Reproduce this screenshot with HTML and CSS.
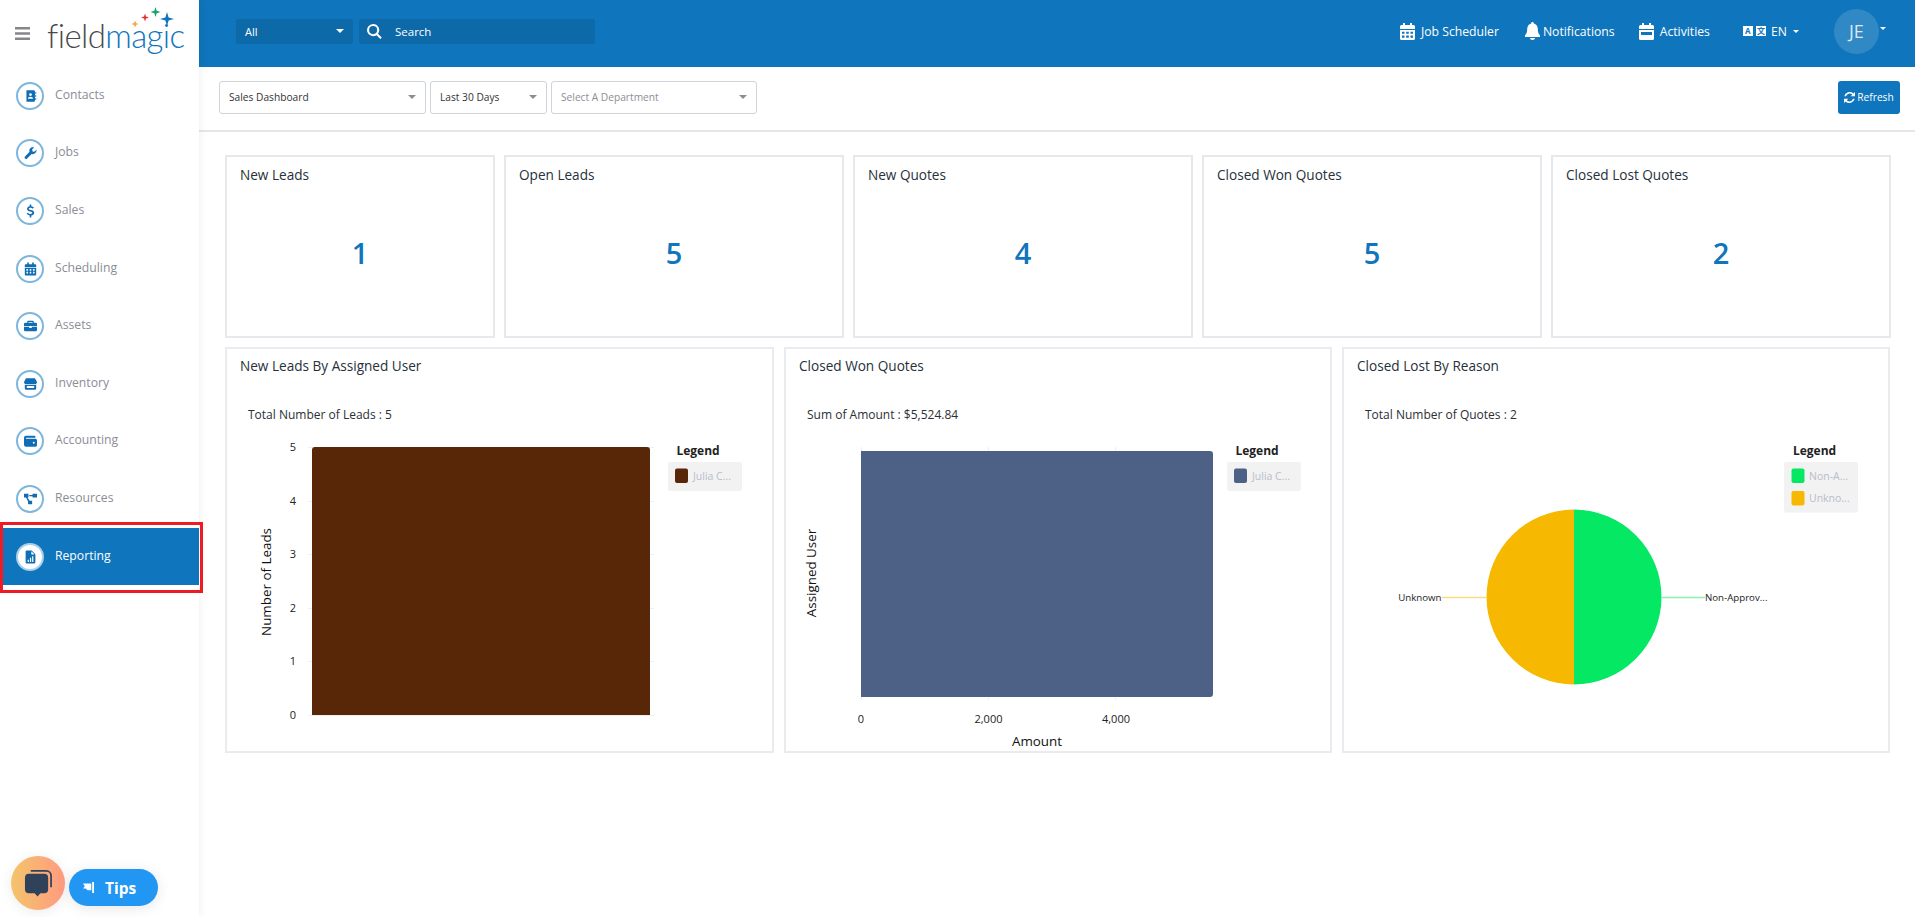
FILE: index.html
```html
<!DOCTYPE html>
<html lang="en">
<head>
<meta charset="utf-8">
<title>Sales Dashboard</title>
<link rel="stylesheet" href="styles.css">
</head>
<body>
<div class="app">
  <aside class="sidebar">
    <div class="brand">
      <svg class="burger" viewBox="0 0 15 13"><path d="M0 0h15v2.400H0zM0 5.300h15v2.400H0zM0 10.600h15V13H0z"/></svg>
      <div class="logo">
        <span class="logo-field">field</span><span class="logo-magic">magic</span>
        <svg class="logo-stars" viewBox="0 0 50 24">
          <path fill="#f4a63a" d="M4 13.500l1 2.500 2.500 1-2.500 1-1 2.500-1-2.500-2.500-1 2.500-1z"/>
          <path fill="#e8303c" d="M14 6.500l1 3 3 1-3 1-1 3-1-3-3-1 3-1z"/>
          <path fill="#16a765" d="M24.500 0l1.200 3.800 3.800 1.200-3.800 1.200-1.200 3.800-1.200-3.800-3.800-1.200 3.800-1.200z"/>
          <path fill="#0f75bc" d="M36 5l1.600 5.400 5.400 1.600-5.400 1.600-1.600 5.400-1.600-5.400-5.400-1.600 5.400-1.600z"/>
        </svg>
      </div>
    </div>
    <nav class="nav">
      <a class="nav-item"><span class="nav-icon"><svg viewBox="0 0 16 16"><path d="M3 1h9a1.500 1.500 0 0 1 1.500 1.500v11A1.500 1.500 0 0 1 12 15H3zM8 4.500a1.800 1.800 0 1 0 0 3.600 1.800 1.800 0 0 0 0-3.600zM4.800 11.500h6.400c0-1.800-1.400-2.700-3.200-2.700s-3.200.9-3.200 2.700zM14 3h1v2.500h-1zM14 6.700h1v2.500h-1zM14 10.400h1v2.500h-1z"/></svg></span><span class="nav-label">Contacts</span></a>
      <a class="nav-item"><span class="nav-icon"><svg viewBox="0 0 16 16"><path d="M15.300 4.100l-2.500 2.500-2.300-.5-.5-2.300L12.500 1.300C10.700.5 8.600 1 7.500 2.400c-1 1.200-1.200 2.800-.6 4.200L1 12.500a1.800 1.800 0 0 0 2.500 2.500l5.900-5.900c1.400.6 3 .3 4.200-.7 1.400-1.100 2.100-3 1.700-4.300z"/></svg></span><span class="nav-label">Jobs</span></a>
      <a class="nav-item"><span class="nav-icon"><svg viewBox="0 0 16 16"><path d="M7 0h2v2c1.400.2 2.500.8 3.300 1.700l-1.400 1.400c-.8-.8-1.700-1.200-2.800-1.200-1.300 0-2.100.5-2.100 1.300 0 .9.900 1.200 2.400 1.500 2.200.5 4.200 1.200 4.200 3.500 0 1.900-1.500 3.100-3.600 3.300v2.500H7v-2.500c-1.600-.2-2.900-.9-3.800-2l1.500-1.400c.8.900 1.900 1.500 3.200 1.500 1.400 0 2.300-.5 2.300-1.400 0-.9-.9-1.200-2.500-1.600C5.600 8.100 3.800 7.400 3.800 5.200 3.800 3.500 5.100 2.300 7 2z"/></svg></span><span class="nav-label">Sales</span></a>
      <a class="nav-item"><span class="nav-icon"><svg viewBox="0 0 16 16"><path fill-rule="evenodd" d="M4 0h2v2h4V0h2v2h2a1 1 0 0 1 1 1v2.500H1V3a1 1 0 0 1 1-1h2zM1 6.500h14V15a1 1 0 0 1-1 1H2a1 1 0 0 1-1-1zM3 8v2h2V8zm4 0v2h2V8zm4 0v2h2V8zM3 11.500v2h2v-2zm4 0v2h2v-2zm4 0v2h2v-2z"/></svg></span><span class="nav-label">Scheduling</span></a>
      <a class="nav-item"><span class="nav-icon"><svg viewBox="0 0 16 16"><path fill-rule="evenodd" d="M5 1.500h6a1 1 0 0 1 1 1V4h2.500A1.500 1.500 0 0 1 16 5.500V8H0V5.500A1.500 1.500 0 0 1 1.500 4H4V2.500a1 1 0 0 1 1-1zM5.500 3v1h5V3zM0 9h6.500v1.500h3V9H16v4a1.500 1.500 0 0 1-1.500 1.500h-13A1.500 1.500 0 0 1 0 13z"/></svg></span><span class="nav-label">Assets</span></a>
      <a class="nav-item"><span class="nav-icon"><svg viewBox="0 0 16 16"><path fill-rule="evenodd" d="M2.500 1h11l2.500 4.500C16 7 15 8 13.800 8H2.200C1 8 0 7 0 5.500zM1 9h14v4.500a1.500 1.500 0 0 1-1.500 1.500h-11A1.500 1.500 0 0 1 1 13.500zm2.500 1.500V13h9v-2.500z"/></svg></span><span class="nav-label">Inventory</span></a>
      <a class="nav-item"><span class="nav-icon"><svg viewBox="0 0 16 16"><path fill-rule="evenodd" d="M2.500 1.500h10.500a1 1 0 0 1 1 1V4H2.800a.6.600 0 0 0 0 1.200H14a2 2 0 0 1 2 2v6A1.800 1.800 0 0 1 14.200 15H2.500A2.500 2.500 0 0 1 0 12.500v-8.500a2.500 2.500 0 0 1 2.500-2.500zM12 9a1.200 1.200 0 1 0 0 2.400A1.200 1.200 0 0 0 12 9z"/></svg></span><span class="nav-label">Accounting</span></a>
      <a class="nav-item"><span class="nav-icon"><svg viewBox="0 0 16 16"><path d="M0 1.500h5.500v4.500H4.300l2.700 4h3v4.500H5V11L2.500 6H0zM10.500 1.500H16V6h-5.500V4.600H6.500V3h4z"/></svg></span><span class="nav-label">Resources</span></a>
      <a class="nav-item is-active"><span class="nav-icon"><svg viewBox="0 0 16 16"><path fill-rule="evenodd" d="M3 0h6.500L14 4.500V14.500a1.500 1.500 0 0 1-1.500 1.500h-9A1.500 1.500 0 0 1 2 14.500V1a1 1 0 0 1 1-1zM9 1v4h4zM4.500 11.500V14H6v-2.500zM7.300 9v5h1.500V9zM10 7v7h1.500V7z"/></svg></span><span class="nav-label">Reporting</span></a>
    </nav>
  </aside>

  <div class="main">
    <header class="topbar">
      <div class="search-group">
        <div class="search-scope"><span>All</span><i class="caret caret-white"></i></div>
        <div class="search-box">
          <svg class="search-icon" viewBox="0 0 16 16"><path d="M6.500 0a6.500 6.500 0 0 1 5.200 10.400l4 4-1.500 1.500-4-4A6.500 6.500 0 1 1 6.500 0zm0 2.200a4.300 4.300 0 1 0 0 8.600 4.300 4.300 0 0 0 0-8.600z"/></svg>
          <span>Search</span>
        </div>
      </div>
      <div class="top-actions">
        <a class="top-link link-job"><svg class="top-icon" viewBox="0 0 15 17"><path fill-rule="evenodd" d="M3 0h2v2h5V0h2v2h1.500A1.500 1.500 0 0 1 15 3.500V6H0V3.500A1.500 1.500 0 0 1 1.500 2H3zM0 7h15v8.500a1.500 1.500 0 0 1-1.500 1.500h-12A1.500 1.500 0 0 1 0 15.500zm2 1.800v2h2.500v-2zm4.200 0v2h2.600v-2zm4.300 0v2H13v-2zM2 12.500v2.300h2.500v-2.300zm4.200 0v2.300h2.600v-2.300zm4.300 0v2.300H13v-2.300z"/></svg>Job Scheduler</a>
        <a class="top-link link-note"><svg class="bell-icon" viewBox="0 0 15 18"><path d="M7.500 0c.8 0 1.300.6 1.300 1.400 2.700.6 4 2.800 4 5.600 0 3.500.9 4.800 2.200 6.200V15H0v-1.800C1.300 11.800 2.200 10.500 2.200 7c0-2.800 1.300-5 4-5.600C6.200.6 6.700 0 7.500 0zM5 16h5c0 1.100-1.100 2-2.500 2S5 17.100 5 16z"/></svg>Notifications</a>
        <a class="top-link link-act"><svg class="top-icon" viewBox="0 0 15 17"><path fill-rule="evenodd" d="M3 0h2v2h5V0h2v2h1.500A1.500 1.500 0 0 1 15 3.500V6H0V3.500A1.500 1.500 0 0 1 1.500 2H3zM0 7h15v8.500a1.500 1.500 0 0 1-1.500 1.500h-12A1.500 1.500 0 0 1 0 15.500zm2 2v3h11V9z"/></svg>Activities</a>
        <a class="top-link link-lang"><span class="lang-icon"><b class="lang-a">A</b><b class="lang-b">文</b></span>EN<i class="caret caret-white caret-small"></i></a>
        <div class="avatar">JE</div>
        <i class="caret caret-white caret-small caret-avatar"></i>
      </div>
    </header>

    <section class="toolbar">
      <div class="select select-a"><span>Sales Dashboard</span><i class="caret"></i></div>
      <div class="select select-b"><span>Last 30 Days</span><i class="caret"></i></div>
      <div class="select select-c"><span class="placeholder">Select A Department</span><i class="caret"></i></div>
      <button class="refresh"><svg viewBox="0 0 12 12"><path d="M10.300 1.700L12 0v4.700H7.300l1.700-1.700A4 4 0 0 0 2.200 4.700H.3a5.900 5.900 0 0 1 10-3zM0 7.300h4.700L3 9a4 4 0 0 0 6.800-1.700h1.900a5.900 5.900 0 0 1-10 3L0 12z"/></svg>Refresh</button>
    </section>

    <section class="content">
      <div class="kpi-row">
        <article class="kpi kpi-first"><h3>New Leads</h3><p>1</p></article>
        <article class="kpi"><h3>Open Leads</h3><p>5</p></article>
        <article class="kpi"><h3>New Quotes</h3><p>4</p></article>
        <article class="kpi"><h3>Closed Won Quotes</h3><p>5</p></article>
        <article class="kpi"><h3>Closed Lost Quotes</h3><p>2</p></article>
      </div>
      <div class="chart-row">
        <article class="chart-card">
          <h3>New Leads By Assigned User</h3>
          <p class="chart-sum">Total Number of Leads : 5</p>
          <svg class="chart" viewBox="0 0 545 321">
            <g class="grid">
              <path d="M81 17.500H427M81 71.500H427M81 124.500H427M81 178.500H427M81 231.500H427M81 285.500H427"/>
            </g>
            <path fill="#582707" d="M85 285V20a3 3 0 0 1 3-3H420a3 3 0 0 1 3 3V285z"/>
            <g class="tick" text-anchor="middle">
              <text x="66" y="21">5</text><text x="66" y="75">4</text><text x="66" y="128">3</text><text x="66" y="182">2</text><text x="66" y="235">1</text><text x="66" y="289">0</text>
            </g>
            <text class="axis-title" text-anchor="middle" transform="translate(44 152) rotate(-90)">Number of Leads</text>
            <text class="legend-title" x="471" y="24.500" text-anchor="middle">Legend</text>
            <rect class="legend-box" x="441" y="32" width="74" height="29" rx="2"/>
            <rect x="448" y="38.500" width="13" height="14.500" rx="2" fill="#582707"/>
            <text class="legend-text" x="466" y="50">Julia C...</text>
          </svg>
        </article>
        <article class="chart-card">
          <h3>Closed Won Quotes</h3>
          <p class="chart-sum">Sum of Amount : $5,524.84</p>
          <svg class="chart" viewBox="0 0 545 321">
            <g class="grid">
              <path d="M75.500 17V270M202.500 17V270M329.500 17V270"/>
            </g>
            <path fill="#4d6085" d="M75 21H424a3 3 0 0 1 3 3V264a3 3 0 0 1-3 3H75z"/>
            <g class="tick" text-anchor="middle">
              <text x="75" y="293">0</text><text x="202.500" y="293">2,000</text><text x="330" y="293">4,000</text>
            </g>
            <text class="axis-title" x="251" y="316" text-anchor="middle">Amount</text>
            <text class="axis-title" text-anchor="middle" transform="translate(30 143) rotate(-90)">Assigned User</text>
            <text class="legend-title" x="471" y="24.500" text-anchor="middle">Legend</text>
            <rect class="legend-box" x="441" y="32" width="74" height="29" rx="2"/>
            <rect x="448" y="38.500" width="13" height="14.500" rx="2" fill="#4d6085"/>
            <text class="legend-text" x="466" y="50">Julia C...</text>
          </svg>
        </article>
        <article class="chart-card">
          <h3>Closed Lost By Reason</h3>
          <p class="chart-sum">Total Number of Quotes : 2</p>
          <svg class="chart" viewBox="0 0 545 321">
            <path fill="#05e864" d="M230 79.500A87.500 87.500 0 0 1 230 254.500z"/>
            <path fill="#f6b800" d="M230 79.500A87.500 87.500 0 0 0 230 254.500z"/>
            <path class="leader-green" d="M317.500 167.500H361"/>
            <path class="leader-amber" d="M98 167.500H142.500"/>
            <text class="pie-label" x="97.500" y="171" text-anchor="end">Unknown</text>
            <text class="pie-label" x="361" y="171">Non-Approv...</text>
            <text class="legend-title" x="470.500" y="24.500" text-anchor="middle">Legend</text>
            <rect class="legend-box" x="440" y="32" width="74" height="50.500" rx="2"/>
            <rect x="447.500" y="38.500" width="13" height="14.500" rx="2" fill="#05e864"/>
            <text class="legend-text" x="465" y="50">Non-A...</text>
            <rect x="447.500" y="61" width="13" height="14.500" rx="2" fill="#f6b800"/>
            <text class="legend-text" x="465" y="72">Unkno...</text>
          </svg>
        </article>
      </div>
    </section>
  </div>
</div>

<div class="annotation"></div>
<div class="chat-bubble">
  <svg viewBox="0 0 30 30"><path fill="none" stroke="#2f4259" stroke-width="1.800" d="M7 2h16a5 5 0 0 1 5 5v12"/><path fill="#2f4259" d="M5 5h16a4 4 0 0 1 4 4v12a4 4 0 0 1-4 4h-4l-3 3.500-3-3.500H5a4 4 0 0 1-4-4V9a4 4 0 0 1 4-4z"/></svg>
</div>
<button class="tips"><svg viewBox="0 0 12 12"><path d="M10 0h2v12h-2zM0 1.500h9V9H5L3 7H0l2-2.500z"/></svg>Tips</button>
</body>
</html>
```

FILE: styles.css
```css
* { box-sizing: border-box; }
html, body { margin: 0; height: 100%; }
body {
  font-family: "Open Sans", "Noto Sans", sans-serif;
  background: #fff;
  color: #26303a;
  overflow: hidden;
}
.app { display: flex; height: 917px; }

/* Sidebar */
.sidebar {
  flex: 0 0 199px;
  width: 199px;
  min-width: 0;
  background: #fff;
  box-shadow: 2px 0 8px rgba(0, 0, 0, .05);
  position: relative;
  z-index: 2;
}
.brand { display: flex; align-items: center; height: 67px; padding-left: 15px; }
.burger { width: 15px; height: 13px; fill: #84868a; }
.logo { position: relative; margin-left: 17px; font-family: Lato, sans-serif; font-weight: 300; font-size: 33px; line-height: 40px; letter-spacing: -.6px; margin-top: 3px; white-space: nowrap; }
.logo-field { color: #4a4a4c; }
.logo-magic { color: #0f75bc; }
.logo-stars { position: absolute; left: 84px; top: -8px; width: 50px; height: 24px; }
.nav { display: flex; flex-direction: column; }
.nav-item {
  display: flex;
  align-items: center;
  gap: 11px;
  height: 57.6px;
  padding-left: 16px;
  font-size: 12.2px;
  color: #8b8d96;
}
.nav-label { margin-top: -3px; }
.nav-icon {
  width: 28px;
  height: 28px;
  flex: none;
  border: 2px solid #7fb6dc;
  border-radius: 50%;
  display: flex;
  align-items: center;
  justify-content: center;
}
.nav-icon svg { width: 13px; height: 14px; fill: #0f6db5; }
.nav-item.is-active { background: #0f75bc; color: #fff; margin-left: 3px; padding-left: 13px; }
.is-active .nav-icon { background: #fff; border-color: #a9cfe9; }

/* Header */
.main { flex: 1; min-width: 0; display: flex; flex-direction: column; }
.topbar {
  height: 67px;
  flex: none;
  background: #0f75bc;
  color: #fff;
  display: flex;
  align-items: center;
  padding-left: 37px;
}
.search-group { display: flex; gap: 6px; align-items: center; margin-top: -5px; }
.search-scope {
  width: 117px;
  height: 25px;
  border-radius: 3px;
  background: #0e69a9;
  display: flex;
  align-items: center;
  justify-content: space-between;
  padding: 0 9px;
  font-size: 11px;
}
.search-box {
  width: 236px;
  height: 25px;
  border-radius: 3px;
  background: #0e69a9;
  display: flex;
  align-items: center;
  gap: 13px;
  padding-left: 8px;
  font-size: 11.5px;
}
.search-icon { width: 15px; height: 15px; fill: #fff; }
.top-actions { margin-left: auto; display: flex; align-items: center; height: 100%; font-size: 12.2px; position: relative; width: 515px; margin-top: -5px; }
.top-link { display: flex; align-items: center; white-space: nowrap; }
.link-job { gap: 6px; }
.link-note { margin-left: 26px; gap: 3px; }
.link-act { margin-left: 24px; gap: 6px; }
.link-lang { margin-left: 33px; gap: 5px; }
.top-icon { width: 15px; height: 17px; fill: #fff; }
.bell-icon { width: 15px; height: 18px; fill: #fff; }
.lang-icon { display: flex; gap: 3px; }
.lang-icon b { width: 10px; height: 10px; background: #fff; color: #0f75bc; font-size: 8px; line-height: 10px; text-align: center; font-weight: 700; }
.lang-b { font-family: "Noto Sans CJK SC", sans-serif; }
.avatar { width: 45px; height: 45px; border-radius: 50%; background: rgba(255, 255, 255, .14); display: flex; align-items: center; justify-content: center; font-size: 18px; font-weight: 400; margin-left: 35px; color: #dbe8f2; }
.caret-avatar { margin-left: 4px; margin-top: -5px; }

.caret { width: 0; height: 0; border-left: 4px solid transparent; border-right: 4px solid transparent; border-top: 4px solid #8b8d92; flex: none; display: block; }
.caret-white { border-top-color: #fff; }
.caret-small { border-left-width: 3px; border-right-width: 3px; border-top-width: 3px; margin-left: 1px; }

/* Toolbar */
.toolbar {
  height: 65px;
  flex: none;
  border-bottom: 2px solid #e4e6ea;
  display: flex;
  align-items: center;
  gap: 4px;
  padding: 0 15px 3px 20px;
}
.select {
  height: 33px;
  border: 1px solid #cfd3da;
  border-radius: 3px;
  background: #fff;
  display: flex;
  align-items: center;
  justify-content: space-between;
  padding: 0 9px;
  font-size: 10.2px;
  color: #333;
}
.select-a { width: 207px; }
.select-b { width: 117px; }
.select-c { width: 206px; }
.placeholder { color: #8e8e93; }
.refresh {
  margin-left: auto;
  width: 62px;
  height: 33px;
  border: 0;
  border-radius: 3px;
  background: #0f75bc;
  color: #fff;
  font: 10.2px "Open Sans", sans-serif;
  display: flex;
  align-items: center;
  justify-content: center;
  gap: 2px;
  padding: 0;
}
.refresh svg { width: 11px; height: 11px; fill: #fff; }

/* Content */
.content { padding: 23px 24px 0 26px; display: flex; flex-direction: column; gap: 9px; }
.kpi-row { display: flex; gap: 9px; }
.kpi { flex: 1 1 0; height: 183px; border: 2px solid #e6e8ec; padding: 7px 13px; display: flex; flex-direction: column; }
.kpi-first { flex: 0 0 270px; }
h3 { margin: 0; font-size: 13.6px; font-weight: 400; line-height: 21px; color: #26303a; }
.kpi p { margin: 46px 0 0; text-align: center; font-size: 29px; line-height: 44px; font-weight: 600; color: #0f75bc; }

.chart-row { display: grid; grid-template-columns: 549px 548px 548px; gap: 10px; }
.chart-card { height: 406px; border: 2px solid #e9ebee; padding: 6px 0 0; display: flex; flex-direction: column; }
.chart-card h3 { padding-left: 13px; }
.chart-sum { margin: 30px 0 0 21px; font-size: 12px; line-height: 18px; color: #2a2f36; }
.chart { display: block; width: 545px; height: 321px; margin-top: 6px; flex: none; }
.grid path { fill: none; stroke: #eeeff2; stroke-width: 1; }
.tick text { font: 11px "Open Sans", sans-serif; fill: #222; }
.axis-title { font: 13.4px "Open Sans", sans-serif; fill: #111; }
.legend-title { font: 700 12px "Open Sans", sans-serif; fill: #222; }
.legend-box { fill: #f2f2f3; }
.legend-text { font: 10.5px "Open Sans", sans-serif; fill: #b9bdca; }
.pie-label { font: 9.7px "Open Sans", sans-serif; fill: #222; }
.leader-green { stroke: #8af0b4; stroke-width: 1.5; fill: none; }
.leader-amber { stroke: #fbdb80; stroke-width: 1.5; fill: none; }

/* Overlays */
.annotation { position: absolute; left: 0; top: 522px; width: 203px; height: 71px; border: 3px solid #ed1c24; z-index: 3; }
.chat-bubble {
  position: absolute;
  left: 11px;
  top: 856px;
  width: 54px;
  height: 54px;
  border-radius: 50%;
  background: linear-gradient(90deg, #f4c46c, #ff9b80);
  display: flex;
  align-items: center;
  justify-content: center;
  z-index: 4;
  box-shadow: 0 2px 14px rgba(0, 0, 0, .08);
}
.chat-bubble svg { width: 29px; height: 29px; }
.tips {
  position: absolute;
  left: 69px;
  top: 869px;
  width: 89px;
  height: 37px;
  border: 0;
  border-radius: 19px;
  background: #2196f3;
  color: #fff;
  font: 700 15.5px "Open Sans", sans-serif;
  display: flex;
  align-items: center;
  gap: 11px;
  z-index: 4;
  padding: 0 0 0 14px;
  box-shadow: 0 2px 14px rgba(0, 0, 0, .1);
}
.tips svg { width: 11px; height: 11px; fill: #fff; }
```
